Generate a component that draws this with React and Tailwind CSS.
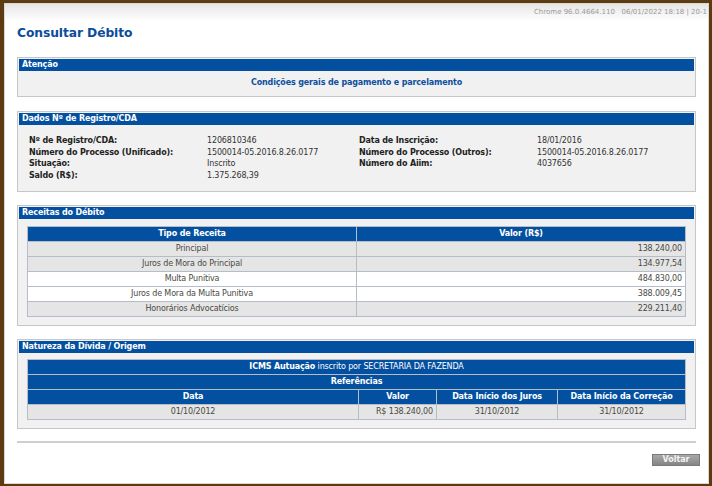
import React from "react";

const F = { fontFamily: '"DejaVu Sans", Verdana, sans-serif' };

function Panel({ title, children, className = "" }) {
  return (
    <div className={"border border-[#c6c6c6] bg-[#f1f1f1] p-px " + className}>
      <div className="h-[12px] bg-[#0350a0] pl-[3px] text-[8px] font-bold leading-[12px] tracking-[-0.15px] text-white">
        {title}
      </div>
      {children}
    </div>
  );
}

const receitas = [
  ["Principal", "138.240,00", true],
  ["Juros de Mora do Principal", "134.977,54", true],
  ["Multa Punitiva", "484.830,00", false],
  ["Juros de Mora da Multa Punitiva", "388.009,45", false],
  ["Honorários Advocatícios", "229.211,40", true],
];

export default function App() {
  return (
    <div
      style={F}
      className="box-border h-[486px] w-[712px] overflow-hidden bg-[#5d3a10] pb-[2px] pl-[4px] pr-[3px] pt-[3px]"
    >
      <div className="flex h-full flex-col border border-[#d8d8d8] bg-white">
        <div className="flex h-[17px] items-center justify-end overflow-hidden whitespace-nowrap bg-gradient-to-b from-[#e6e6e6] to-white pr-[1px] text-[7px] text-[#9a9a9a]">
          <span>Chrome 96.0.4664.110&nbsp;&nbsp;&nbsp;06/01/2022 18:18 | 20-1</span>
        </div>
        <div className="px-[12px]">
          <div className="mt-[4px] h-[16px] text-[12.3px] font-bold leading-[16px] tracking-[-0.1px] text-[#0b4c9c]">
            Consultar Débito
          </div>

          <Panel title="Atenção" className="mt-[16px]">
            <div className="flex h-[24px] items-center justify-center text-[8px] font-bold tracking-[-0.15px] text-[#0d4f9e]">
              Condições gerais de pagamento e parcelamento
            </div>
          </Panel>

          <Panel title="Dados Nº de Registro/CDA" className="mt-[14px]">
            <div className="grid grid-cols-[178px_152px_178px_1fr] pb-[8px] pl-[10px] pt-[10px] text-[8px] leading-[11.7px] tracking-[-0.15px] text-[#222]">
              <div className="font-bold">Nº de Registro/CDA:</div>
              <div className="text-[#333]">1206810346</div>
              <div className="font-bold">Data de Inscrição:</div>
              <div className="text-[#333]">18/01/2016</div>
              <div className="font-bold">Número do Processo (Unificado):</div>
              <div className="text-[#333]">1500014-05.2016.8.26.0177</div>
              <div className="font-bold">Número do Processo (Outros):</div>
              <div className="text-[#333]">1500014-05.2016.8.26.0177</div>
              <div className="font-bold">Situação:</div>
              <div className="text-[#333]">Inscrito</div>
              <div className="font-bold">Número do Aiim:</div>
              <div className="text-[#333]">4037656</div>
              <div className="font-bold">Saldo (R$):</div>
              <div className="text-[#333]">1.375.268,39</div>
              <div></div>
              <div></div>
            </div>
          </Panel>

          <Panel title="Receitas do Débito" className="mt-[13px]">
            <div className="px-[8px] pb-[7px] pt-[7px]">
              <table className="w-full border-collapse border border-[#b5bdc8] text-[8px] tracking-[-0.15px]">
                <thead>
                  <tr className="h-[15px] bg-[#0350a0] text-white">
                    <th className="w-1/2 border border-[#b5bdc8] p-0 font-bold">Tipo de Receita</th>
                    <th className="border border-[#b5bdc8] p-0 font-bold">Valor (R$)</th>
                  </tr>
                </thead>
                <tbody className="text-[#4a4a44]">
                  {receitas.map(([t, v, g]) => (
                    <tr key={t} className={"h-[15px] " + (g ? "bg-[#e5e5e5]" : "bg-white")}>
                      <td className="border border-[#b5bdc8] p-0 text-center">{t}</td>
                      <td className="border border-[#b5bdc8] p-0 pr-[3px] text-right">{v}</td>
                    </tr>
                  ))}
                </tbody>
              </table>
            </div>
          </Panel>

          <Panel title="Natureza da Dívida / Origem" className="mt-[13px]">
            <div className="px-[8px] pb-[7px] pt-[6px]">
              <table className="w-full table-fixed border-collapse border border-[#b5bdc8] text-[8px] tracking-[-0.15px]">
                <colgroup>
                  <col className="w-[331px]" />
                  <col className="w-[78px]" />
                  <col className="w-[121px]" />
                  <col />
                </colgroup>
                <thead className="text-white">
                  <tr className="h-[15px] bg-[#0350a0]">
                    <th colSpan={4} className="border border-[#b5bdc8] p-0 font-normal">
                      <b>ICMS Autuação</b> inscrito por SECRETARIA DA FAZENDA
                    </th>
                  </tr>
                  <tr className="h-[15px] bg-[#0350a0]">
                    <th colSpan={4} className="border border-[#b5bdc8] p-0 font-bold">Referências</th>
                  </tr>
                  <tr className="h-[15px] bg-[#0350a0]">
                    <th className="border border-[#b5bdc8] p-0 font-bold">Data</th>
                    <th className="border border-[#b5bdc8] p-0 font-bold">Valor</th>
                    <th className="border border-[#b5bdc8] p-0 font-bold">Data Início dos Juros</th>
                    <th className="border border-[#b5bdc8] p-0 font-bold">Data Início da Correção</th>
                  </tr>
                </thead>
                <tbody className="text-[#4a4a44]">
                  <tr className="h-[15px] bg-[#e5e5e5]">
                    <td className="border border-[#b5bdc8] p-0 text-center">01/10/2012</td>
                    <td className="border border-[#b5bdc8] p-0 pr-[3px] text-right">R$ 138.240,00</td>
                    <td className="border border-[#b5bdc8] p-0 text-center">31/10/2012</td>
                    <td className="border border-[#b5bdc8] p-0 text-center">31/10/2012</td>
                  </tr>
                </tbody>
              </table>
            </div>
          </Panel>

          <div className="mt-[12px] h-[2px] bg-[#cfcfcf]" />
          <div className="mt-[11px] flex justify-end">
            <button className="-mr-[4px] h-[12px] w-[48px] border border-[#7a7a7a] bg-gradient-to-b from-[#a8a8a8] to-[#858585] p-0 text-[8px] font-bold leading-[10px] text-[#f4f4f4]">
              Voltar
            </button>
          </div>
        </div>
      </div>
    </div>
  );
}
